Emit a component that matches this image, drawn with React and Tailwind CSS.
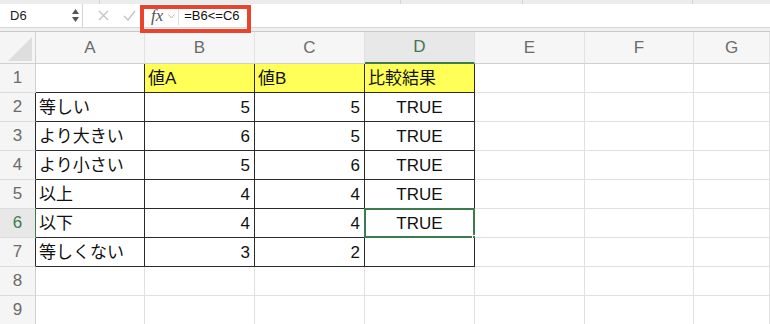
import React from 'react';

const COLS = [
  { key: 'A', w: 'w-[109px]' },
  { key: 'B', w: 'w-[110px]' },
  { key: 'C', w: 'w-[110px]' },
  { key: 'D', w: 'w-[110px]' },
  { key: 'E', w: 'w-[110px]' },
  { key: 'F', w: 'w-[109px]' },
  { key: 'G', w: 'flex-1' },
];

const DATA = [
  ['', '値A', '値B', '比較結果'],
  ['等しい', 5, 5, 'TRUE'],
  ['より大きい', 6, 5, 'TRUE'],
  ['より小さい', 5, 6, 'TRUE'],
  ['以上', 4, 4, 'TRUE'],
  ['以下', 4, 4, 'TRUE'],
  ['等しくない', 3, 2, ''],
];

const FONT = { fontFamily: '"Liberation Sans", "Noto Sans CJK JP", sans-serif' };

const FormulaBar = () => (
  <div className="relative">
    <div className="flex h-[4px] bg-[#ececec]">
      <span className="ml-[99px] h-full w-px bg-[#d4d4d4]" />
      <span className="ml-[300px] h-full w-px bg-[#d4d4d4]" />
      <span className="ml-[121px] h-full w-px bg-[#d4d4d4]" />
      <span className="ml-[169px] h-full w-px bg-[#d4d4d4]" />
    </div>
    <div className="flex h-[24px] items-center border-b border-[#d8d8d8] bg-white">
      <div className="flex h-full w-[83px] items-center justify-between border-r border-[#d4d4d4] pl-[10px] pr-[3px]">
        <span className="text-[13px] text-[#222]">D6</span>
        <div className="flex flex-col items-center gap-[3px]">
          <svg width="7" height="5" viewBox="0 0 7 5">
            <path d="M3.5 0 L7 5 L0 5 Z" fill="#555" />
          </svg>
          <svg width="7" height="5" viewBox="0 0 7 5">
            <path d="M0 0 L7 0 L3.5 5 Z" fill="#555" />
          </svg>
        </div>
      </div>
      <div className="ml-[15px] flex items-center gap-[14px]">
        <svg width="11" height="11" viewBox="0 0 11 11">
          <path d="M1 1 L10 10 M10 1 L1 10" stroke="#c4c4c4" strokeWidth="1.4" />
        </svg>
        <svg width="13" height="11" viewBox="0 0 13 11">
          <path d="M1 6 L5 10 L12 1" stroke="#c4c4c4" strokeWidth="1.4" fill="none" />
        </svg>
      </div>
      <div className="ml-[8px] flex h-full items-center">
        <span
          className="ml-[7px] text-[17px] italic leading-none text-[#555]"
          style={{ fontFamily: '"Liberation Serif", serif' }}
        >
          fx
        </span>
        <svg className="ml-[5px] mt-[2px]" width="7" height="5" viewBox="0 0 7 5">
          <path d="M0.5 0.5 L3.5 4 L6.5 0.5" stroke="#b5b5b5" strokeWidth="1" fill="none" />
        </svg>
        <span className="ml-[3px] h-[19px] w-px bg-[#dcdcdc]" />
        <span className="ml-[5px] text-[13px] font-medium text-[#111]">=B6&lt;=C6</span>
      </div>
    </div>
    <div className="h-[4px] border-b border-[#c8c8c8] bg-[#f0f0f0]" />
    <div className="pointer-events-none absolute left-[140px] top-[5px] h-[28px] w-[111px] border-[4px] border-[#e8452c]" />
  </div>
);

const ColumnHeader = () => (
  <div className="flex h-[32px]">
    <div className="relative w-[36px] border-r border-b border-[#d0d0d0] bg-[#f5f5f5]">
      <svg className="absolute left-[8px] top-[5px]" width="24" height="24" viewBox="0 0 24 24">
        <path d="M24 0 L24 24 L0 24 Z" fill="#dedede" />
      </svg>
    </div>
    {COLS.map((c) => (
      <div
        key={c.key}
        className={`${c.w} flex items-center justify-center border-r border-[#e2e2e2] text-[17px] ${
          c.key === 'D'
            ? 'border-b-2 border-b-[#3d7b4f] bg-[#e8e8e8] text-[#3d7b4f]'
            : 'border-b border-b-[#cfcfcf] bg-[#f6f6f6] text-[#6b6b6b]'
        }`}
      >
        {c.key}
      </div>
    ))}
  </div>
);

const Row = ({ n, values }) => {
  const inTable = n <= 7;
  const selected = n === 6;
  const headerBorder = selected ? 'border-r-[#3d7b4f]' : inTable && n > 1 ? 'border-r-[#2a2a2a]' : 'border-r-[#d0d0d0]';

  return (
    <div className="flex h-[29px]">
      <div
        className={`flex w-[36px] items-center justify-center border-r border-b border-b-[#dcdcdc] text-[17px] ${headerBorder} ${
          selected ? 'bg-[#e8e8e8] text-[#3d7b4f]' : 'bg-[#f5f5f5] text-[#6b6b6b]'
        }`}
      >
        {n}
      </div>
      {COLS.map((c, i) => {
        const v = values ? values[i] : undefined;
        const tableCell = inTable && i < 4;
        const yellow = n === 1 && i > 0 && i < 4;
        const numeric = typeof v === 'number';
        const align = v === 'TRUE' ? 'justify-center' : numeric ? 'justify-end pr-[4px]' : 'justify-start pl-[3px]';

        return (
          <div
            key={c.key}
            className={`${c.w} relative flex items-center border-r border-b text-[17px] text-[#111] ${align} ${
              tableCell ? 'border-[#2a2a2a]' : 'border-[#e0e0e0]'
            } ${yellow ? 'bg-[#ffff57]' : 'bg-white'}`}
          >
            {v !== undefined && v !== '' && <span className="pt-[1px]">{v}</span>}
            {selected && c.key === 'D' && (
              <div className="pointer-events-none absolute -top-[1px] -left-[1px] -right-[1px] -bottom-[1px] border-2 border-[#3d7b4f]">
                <span className="absolute -right-[4px] -bottom-[4px] h-[5px] w-[5px] border border-white bg-[#3d7b4f]" />
              </div>
            )}
          </div>
        );
      })}
    </div>
  );
};

export default function App() {
  return (
    <div className="h-[324px] w-[770px] overflow-hidden bg-white" style={FONT}>
      <FormulaBar />
      <ColumnHeader />
      {[1, 2, 3, 4, 5, 6, 7, 8, 9].map((n) => (
        <Row key={n} n={n} values={DATA[n - 1]} />
      ))}
    </div>
  );
}
